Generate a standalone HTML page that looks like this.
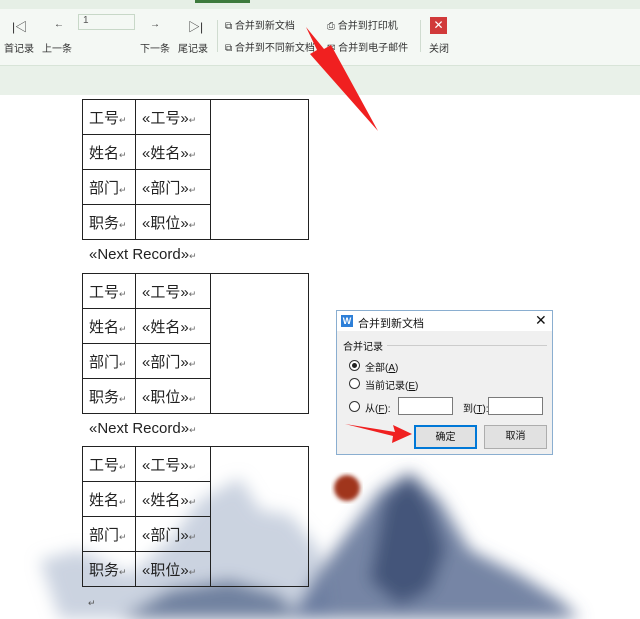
<!DOCTYPE html><html><head><meta charset="utf-8"><style>
*{margin:0;padding:0;box-sizing:border-box}
body{width:640px;height:619px;overflow:hidden;background:#fff;font-family:"Liberation Sans","Noto Sans CJK SC",sans-serif;position:relative}
.a{position:absolute}
.tb{left:0;top:0;width:640px;height:65px;background:#f4f8f4;border-top:9px solid #e6efe6}
.band{left:0;top:65px;width:640px;height:30px;background:#e9f1e9;border-top:1px solid #d8e4d8}
.lbl{font-size:10px;color:#333;white-space:nowrap}
table{position:absolute;border-collapse:collapse;left:82px;width:227px}
td{border:1px solid #222;height:35px;font-size:15px;color:#222;padding-left:6px;white-space:nowrap}
i{font-style:normal;font-size:9px;color:#666}
.nr{font-size:15px;color:#222}
.dlg{left:336px;top:310px;width:217px;height:145px;border:1px solid #8aaed0;background:#f0f0f0;font-size:10px;color:#111}
.btn{position:absolute;height:24px;width:63px;background:#e1e1e1;border:1px solid #adadad;text-align:center;line-height:22px}
.rad{position:absolute;width:11px;height:11px;border:1px solid #333;border-radius:50%;background:#fff}
.inp{position:absolute;width:55px;height:18px;background:#fff;border:1px solid #7a7a7a}
</style></head><body>
<svg class="a" style="left:0;top:400px" width="640" height="219">
<defs><filter id="b"><feGaussianBlur stdDeviation="8"/></filter><filter id="c"><feGaussianBlur stdDeviation="2"/></filter></defs>
<g filter="url(#b)">
<path d="M40 160 L80 150 L130 175 L170 140 L200 100 L240 78 L260 110 L290 115 L320 150 L330 219 L60 219Z" fill="#a8b6cc" opacity=".6"/>
<path d="M120 219 L170 190 L230 180 L280 195 L300 219Z" fill="#5a6d90" opacity=".8"/>
<path d="M290 219 L320 170 L350 130 L380 90 L410 72 L440 100 L470 150 L520 175 L560 200 L580 219Z" fill="#5d7095" opacity=".85"/>
<path d="M385 100 L410 75 L430 105 L445 150 L430 190 L400 205 L370 180Z" fill="#3b4e72" opacity=".85"/>
</g>
<circle cx="347" cy="88" r="13" fill="#a0341e" filter="url(#c)"/>
</svg>
<div class="a tb"></div>
<div class="a band"></div>
<div class="a lbl" style="left:12px;top:18px;font-size:12px">|◁</div>
<div class="a lbl" style="left:4px;top:40px">首记录</div>
<div class="a lbl" style="left:54px;top:19px">←</div>
<div class="a lbl" style="left:42px;top:40px">上一条</div>
<div class="a" style="left:78px;top:14px;width:57px;height:16px;border:1px solid #c8d8c8;background:#f4f8f4;font-size:10px;color:#555;padding-left:4px">1</div>
<div class="a lbl" style="left:150px;top:19px">→</div>
<div class="a lbl" style="left:140px;top:40px">下一条</div>
<div class="a lbl" style="left:188px;top:18px;font-size:12px">▷|</div>
<div class="a lbl" style="left:178px;top:40px">尾记录</div>
<div class="a" style="left:217px;top:20px;width:1px;height:32px;background:#d0dcd0"></div>
<div class="a lbl" style="left:225px;top:17px">⧉ 合并到新文档</div>
<div class="a lbl" style="left:225px;top:39px">⧉ 合并到不同新文档</div>
<div class="a lbl" style="left:327px;top:17px">⎙ 合并到打印机</div>
<div class="a lbl" style="left:327px;top:39px">✉ 合并到电子邮件</div>
<div class="a" style="left:420px;top:20px;width:1px;height:32px;background:#d0dcd0"></div>
<div class="a" style="left:430px;top:17px;width:17px;height:17px;background:#d13a3a;color:#fff;font-size:12px;text-align:center;line-height:17px">✕</div>
<div class="a lbl" style="left:429px;top:40px">关闭</div>
<div class="a" style="top:0;height:3px;background:#3d7a3d;left:195px;width:55px"></div>
<table style="top:99px"><tr><td style="width:53px">工号<i>↵</i></td><td style="width:75px">«工号»<i>↵</i></td><td rowspan="4"></td></tr><tr><td>姓名<i>↵</i></td><td>«姓名»<i>↵</i></td></tr><tr><td>部门<i>↵</i></td><td>«部门»<i>↵</i></td></tr><tr><td>职务<i>↵</i></td><td>«职位»<i>↵</i></td></tr></table>
<div class="a nr" style="left:89px;top:246px">«Next Record»<i>↵</i></div>
<table style="top:273px"><tr><td style="width:53px">工号<i>↵</i></td><td style="width:75px">«工号»<i>↵</i></td><td rowspan="4"></td></tr><tr><td>姓名<i>↵</i></td><td>«姓名»<i>↵</i></td></tr><tr><td>部门<i>↵</i></td><td>«部门»<i>↵</i></td></tr><tr><td>职务<i>↵</i></td><td>«职位»<i>↵</i></td></tr></table>
<div class="a nr" style="left:89px;top:420px">«Next Record»<i>↵</i></div>
<table style="top:446px"><tr><td style="width:53px">工号<i>↵</i></td><td style="width:75px">«工号»<i>↵</i></td><td rowspan="4"></td></tr><tr><td>姓名<i>↵</i></td><td>«姓名»<i>↵</i></td></tr><tr><td>部门<i>↵</i></td><td>«部门»<i>↵</i></td></tr><tr><td>职务<i>↵</i></td><td>«职位»<i>↵</i></td></tr></table>
<div class="a" style="left:88px;top:598px;font-size:9px;color:#555">↵</div>
<div class="a dlg">
<div style="height:20px;background:#fff;position:relative">
<div class="a" style="left:4px;top:4px;width:12px;height:12px;background:#2d7fd8;color:#fff;font-size:9px;text-align:center;line-height:12px;font-weight:bold">W</div>
<div class="a" style="left:21px;top:4px;font-size:11px">合并到新文档</div>
<div class="a" style="left:198px;top:1px;font-size:14px">✕</div></div>
<div class="a" style="left:6px;top:27px">合并记录</div>
<div class="a" style="left:50px;top:34px;width:160px;height:1px;background:#ccc"></div>
<div class="rad" style="left:12px;top:49px"><div style="width:5px;height:5px;background:#222;border-radius:50%;margin:2px"></div></div>
<div class="a" style="left:28px;top:48px">全部(<u>A</u>)</div>
<div class="rad" style="left:12px;top:67px"></div>
<div class="a" style="left:28px;top:66px">当前记录(<u>E</u>)</div>
<div class="rad" style="left:12px;top:90px"></div>
<div class="a" style="left:28px;top:89px">从(<u>F</u>):</div>
<div class="inp" style="left:61px;top:86px"></div>
<div class="a" style="left:126px;top:89px">到(<u>T</u>):</div>
<div class="inp" style="left:151px;top:86px"></div>
<div class="btn" style="left:77px;top:114px;border:2px solid #0078d7">确定</div>
<div class="btn" style="left:147px;top:114px">取消</div>
</div>
<svg class="a" style="left:0;top:0" width="640" height="619">
<path d="M378 131 L331 45 L324 49 L306 27 L317 50 L310 54Z" fill="#f02020"/>
<path d="M345 424 L395 432 L393 425 L412 434 L392 443 L393 436Z" fill="#f02020"/>
</svg>
</body></html>
